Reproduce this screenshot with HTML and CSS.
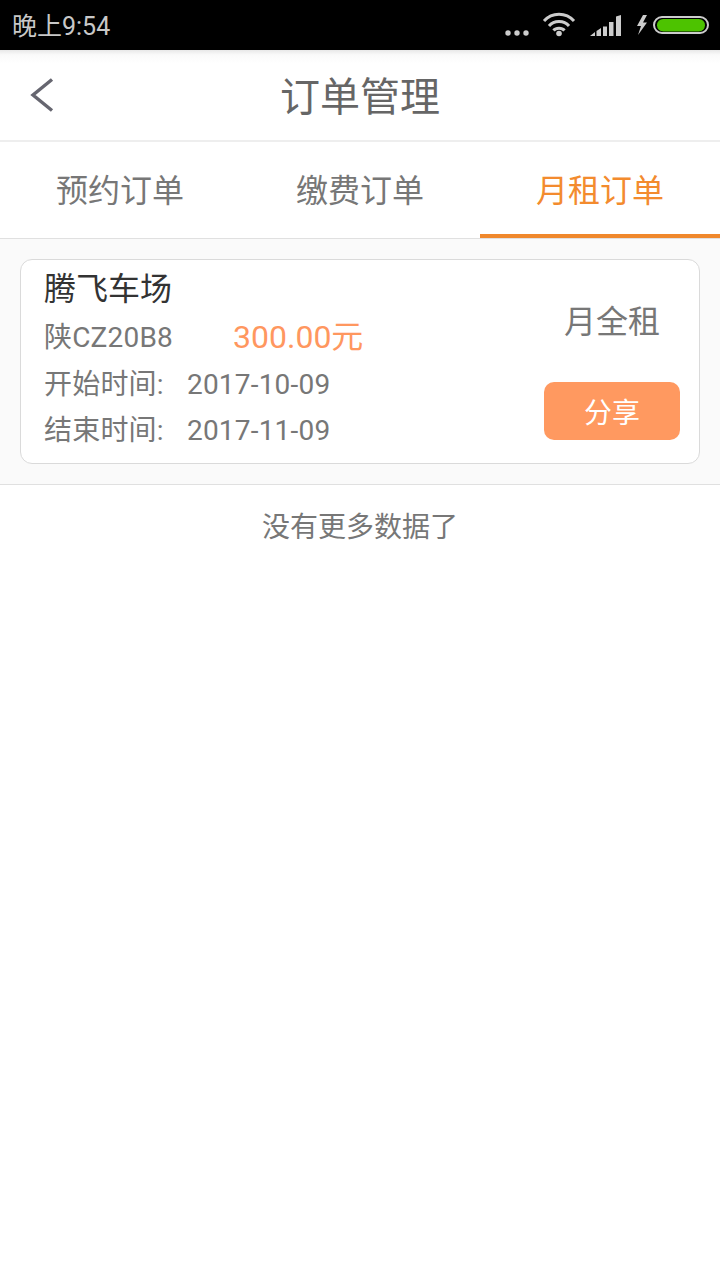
FILE: index.html
```html
<!DOCTYPE html>
<html lang="zh-CN">
<head>
    <meta charset="UTF-8">
    <meta name="viewport" content="width=device-width, initial-scale=1.0">
    <title>订单管理</title>
    <link rel="stylesheet" href="styles.css">
</head>
<body>
    <div class="status-bar">
        <span class="status-time">晚上9:54</span>
        <svg class="status-icons" width="206" height="30" viewBox="0 0 206 30">
            <circle cx="5" cy="22" r="2.7" fill="#ccc"/>
            <circle cx="14" cy="22" r="2.7" fill="#ccc"/>
            <circle cx="23" cy="22" r="2.7" fill="#ccc"/>
            <path d="M41 10 C49 1 63 1 71 10 M46 15 C51 9 61 9 66 15 M50.500 19.500 C53 16.500 59 16.500 61.500 19.500" fill="none" stroke="#ccc" stroke-width="3"/>
            <circle cx="56" cy="22.500" r="2.800" fill="#ccc"/>
            <path d="M87 25 L92 21 V25 Z M93.500 20 L98 17 V25 H93.500 Z M100 15.500 H104 V25 H100 Z M106 11 H110.500 V25 H106 Z M113 5.500 L118 4 V25 H113 Z" fill="#ccc"/>
            <path d="M140 4 L134 15 H138 L135 24 L144 11.500 H140 L144 4 Z" fill="#ccc"/>
            <rect x="151" y="6" width="54" height="16" rx="8" fill="none" stroke="#ccc" stroke-width="2"/>
            <rect x="154" y="8" width="48" height="12.500" rx="6.200" fill="#4dc300"/>
        </svg>
    </div>
    <header class="title-bar">
        <svg class="back-icon" width="24" height="34" viewBox="0 0 24 34">
            <path d="M22 1.500 L3 17 L22 32.500" fill="none" stroke="#666670" stroke-width="3.400"/>
        </svg>
        <h1>订单管理</h1>
    </header>
    <nav class="tabs">
        <div class="tab">预约订单</div>
        <div class="tab">缴费订单</div>
        <div class="tab active">月租订单</div>
    </nav>
    <section class="order-list">
        <div class="order-card">
            <div class="order-info">
                <div class="lot-name">腾飞车场</div>
                <div class="plate-row">
                    <span class="plate">陕CZ20B8</span>
                    <span class="price">300.00元</span>
                </div>
                <div class="time-row"><span class="time-label">开始时间:</span><span>2017-10-09</span></div>
                <div class="time-row"><span class="time-label">结束时间:</span><span>2017-11-09</span></div>
            </div>
            <div class="order-side">
                <div class="order-type">月全租</div>
                <button class="share-btn">分享</button>
            </div>
        </div>
    </section>
    <p class="no-more">没有更多数据了</p>
</body>
</html>
```

FILE: styles.css
```css
* {
    box-sizing: border-box;
}
body {
    margin: 0;
    height: 1280px;
    background: #fff;
    font-family: Roboto, "Noto Sans CJK SC", sans-serif;
    color: #777;
    overflow: hidden;
}
.status-bar {
    height: 50px;
    background: #000;
    display: flex;
    justify-content: space-between;
    padding: 7px 10px 0 12px;
}
.status-time {
    font-size: 25px;
    line-height: 40px;
    color: #c8c8c8;
}
.status-icons {
    margin-top: 4px;
    margin-right: 1px;
}
.title-bar {
    height: 92px;
    display: flex;
    align-items: center;
    justify-content: center;
    position: relative;
    border-bottom: 2px solid #eee;
    background: linear-gradient(#e8e8e8, #fafafa 5px, #fff 14px);
}
.back-icon {
    position: absolute;
    left: 30px;
    top: 28px;
}
.title-bar h1 {
    margin: 0 0 2px;
    font-size: 40px;
    font-weight: 400;
    color: #666;
}
.tabs {
    height: 97px;
    display: flex;
    border-bottom: 1px solid #e0e0e0;
}
.tab {
    flex: 1;
    text-align: center;
    font-size: 32px;
    line-height: 98px;
    color: #777;
}
.tab.active {
    color: #f38b2e;
    border-bottom: 4px solid #f0882c;
}
.order-list {
    background: #fafafa;
    padding: 20px;
    height: 246px;
    border-bottom: 1px solid #e0e0e0;
}
.order-card {
    height: 205px;
    background: #fff;
    border: 1px solid #dadada;
    border-radius: 12px;
    display: flex;
    justify-content: space-between;
    padding: 0 19px 0 23px;
}
.lot-name {
    font-size: 32px;
    line-height: 40px;
    margin-top: 9px;
    color: #333;
}
.plate-row {
    display: flex;
    align-items: center;
    height: 52px;
}
.plate {
    font-size: 28px;
    letter-spacing: 0.2px;
    width: 189px;
}
.price {
    font-size: 32px;
    margin-bottom: 2px;
    color: #ff975f;
}
.time-row {
    font-size: 28px;
    letter-spacing: 0.2px;
    line-height: 46px;
    display: flex;
    position: relative;
    top: 1px;
}
.time-label {
    width: 143px;
}
.order-side {
    width: 136px;
    display: flex;
    flex-direction: column;
    align-items: center;
}
.order-type {
    font-size: 32px;
    line-height: 40px;
    margin-top: 42px;
}
.share-btn {
    margin-top: 40px;
    width: 136px;
    height: 58px;
    border: none;
    border-radius: 10px;
    background: #ff9960;
    color: #fff;
    font-family: inherit;
    font-size: 28px;
}
.no-more {
    margin: 0;
    text-align: center;
    font-size: 28px;
    line-height: 40px;
    padding-top: 23px;
}
```
